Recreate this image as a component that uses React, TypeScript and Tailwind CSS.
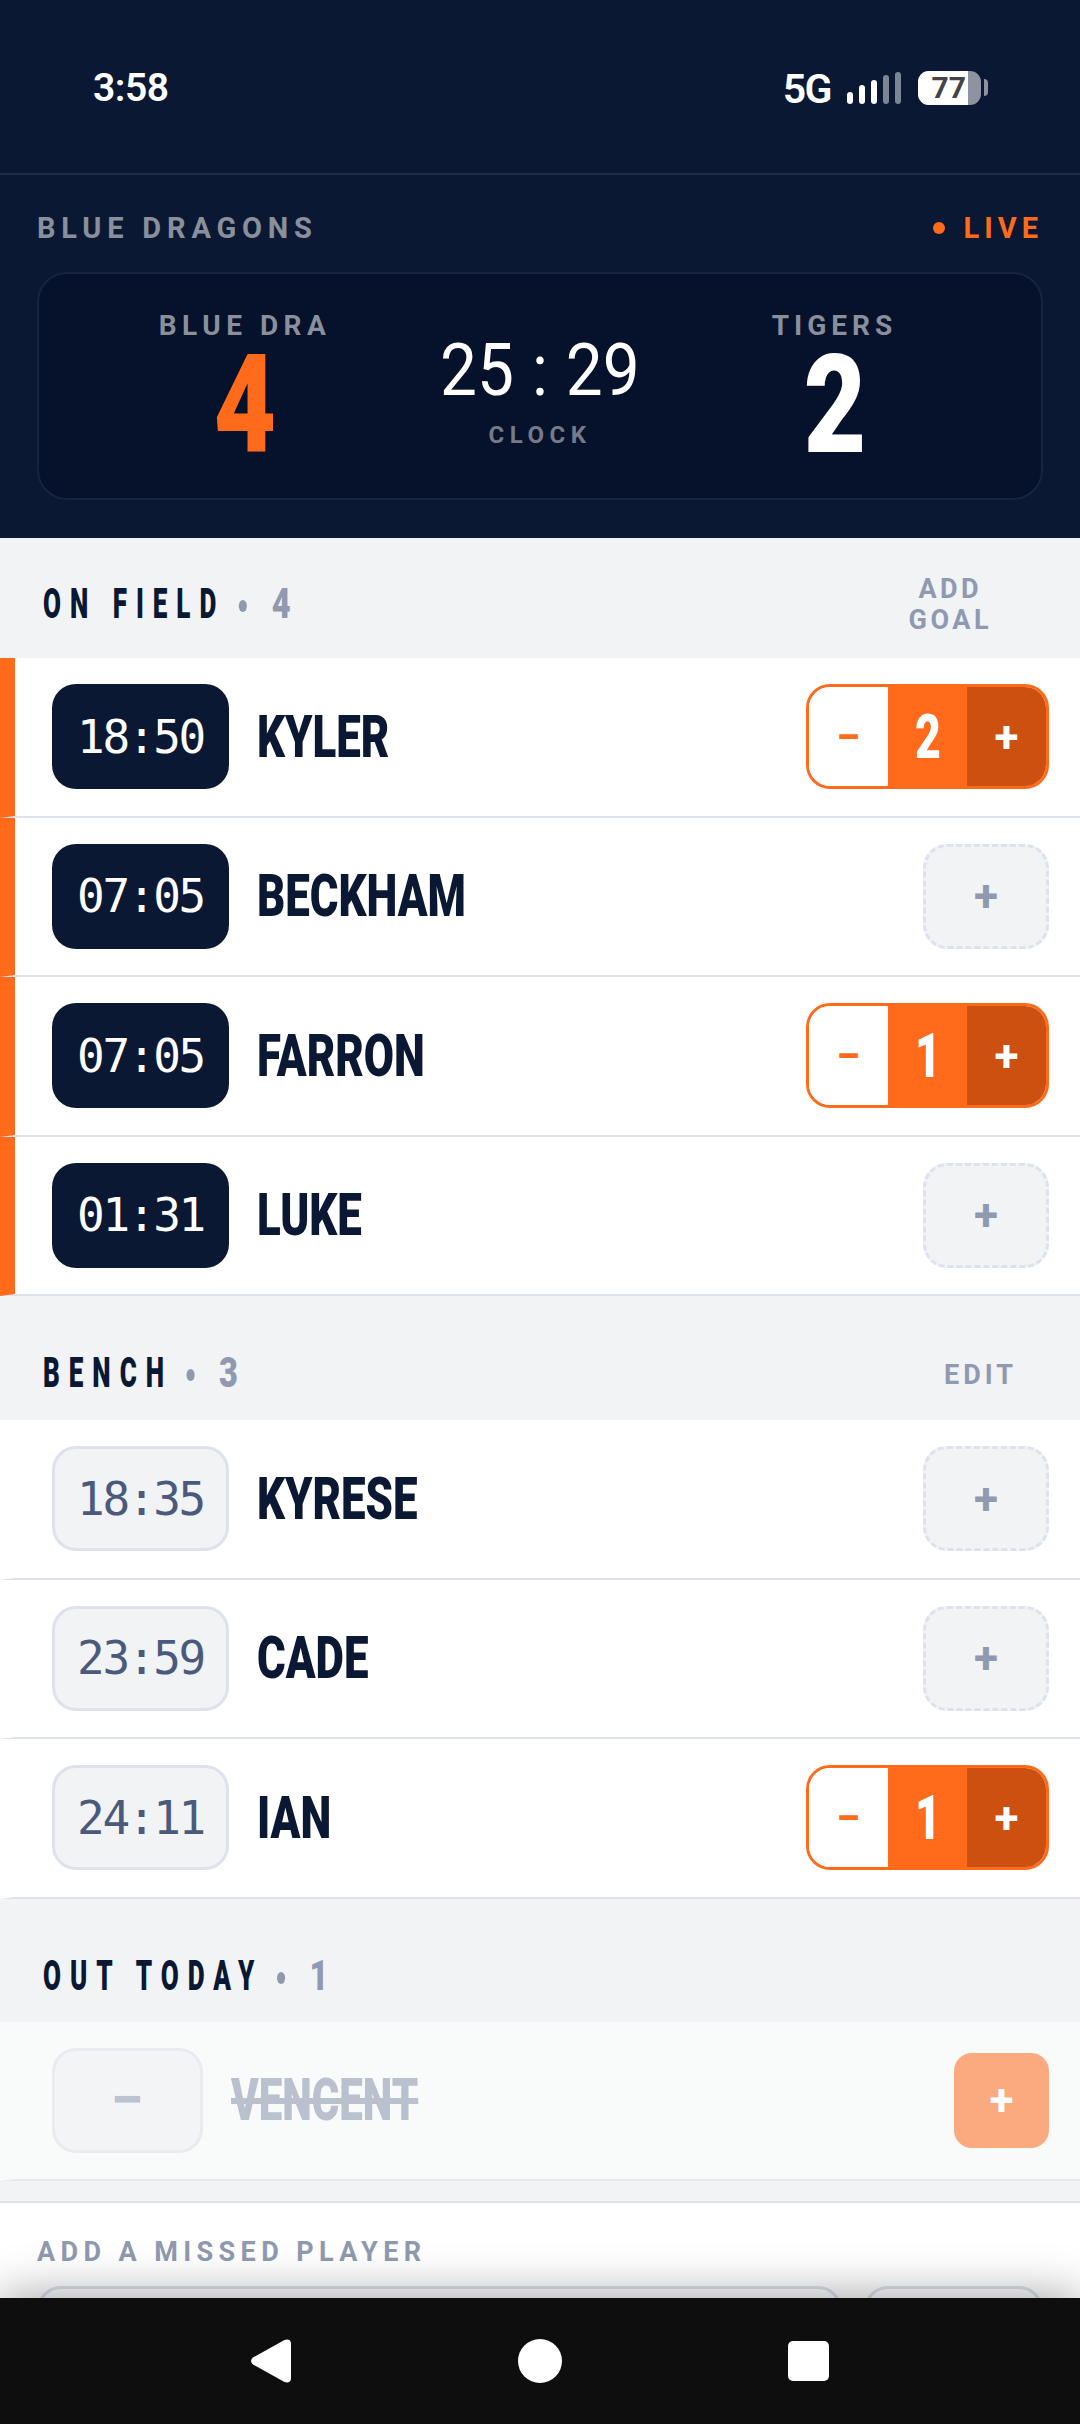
import type { ReactNode } from "react";

const COND = "font-['Roboto','Liberation_Sans',sans-serif] font-black";
const MONO = "font-['DejaVu_Sans_Mono','Liberation_Mono',monospace]";
const UI = "font-['Roboto','Liberation_Sans',sans-serif]";

function Stepper({ count }: { count: number }) {
  return (
    <div className="flex h-[105px] w-[243px] overflow-hidden rounded-[24px] border-[3px] border-[#ff6b1a]">
      <div className={`flex w-[79px] items-center justify-center bg-white text-[44px] font-bold leading-none text-[#ff6b1a] ${UI}`}>
        −
      </div>
      <div className={`flex w-[79px] items-center justify-center bg-[#ff6b1a] text-[62px] leading-none text-white ${COND}`}>
        <span className="scale-x-[0.72]">{count}</span>
      </div>
      <div className={`flex flex-1 items-center justify-center bg-[#cc5010] text-[44px] font-bold leading-none text-white ${UI}`}>
        +
      </div>
    </div>
  );
}

function AddButton() {
  return (
    <div className={`flex h-[105px] w-[126px] items-center justify-center rounded-[24px] border-[3px] border-dashed border-[#dde2ec] bg-[#f1f3f5] text-[44px] font-bold leading-none text-[#8f9ab0] ${UI}`}>
      +
    </div>
  );
}

function PlayerRow({ time, name, goals, active }: { time: string; name: string; goals?: number; active?: boolean }) {
  return (
    <div
      className={`flex h-[159.5px] items-center border-b-2 border-l-[15px] border-b-[#dde2ec] bg-white pl-[37px] pr-[31px] ${
        active ? "border-l-[#ff6b1a]" : "border-l-white"
      }`}
    >
      <div
        className={`flex h-[105px] w-[177px] items-center justify-center rounded-[24px] text-[46px] leading-none tracking-[-2.3px] ${MONO} ${
          active ? "bg-[#0a1833] text-white" : "border-[3px] border-[#dde2ec] bg-[#f1f3f5] text-[#4a5a7c]"
        }`}
      >
        {time}
      </div>
      <div className={`ml-[28px] flex-1 origin-left scale-x-[0.73] text-[60px] leading-none text-[#0a1833] ${COND}`}>{name}</div>
      {goals ? <Stepper count={goals} /> : <AddButton />}
    </div>
  );
}

function SectionHead({ title, count, pb, action }: { title: string; count: number; pb: string; action?: ReactNode }) {
  return (
    <div className={`flex items-end justify-between bg-[#f1f3f5] pl-[43px] ${pb}`}>
      <div className={`origin-left scale-x-[0.62] whitespace-nowrap text-[42px] leading-[30px] tracking-[14.5px] text-[#0a1833] ${COND}`}>
        {title}
        <span className="ml-[17px] align-[-12px] text-[72px] text-[#8f9ab0]">·</span>
        <span className="ml-[20px] inline-block origin-left scale-x-[1.25] text-[#8f9ab0]">{count}</span>
      </div>
      {action}
    </div>
  );
}

function StatusBar() {
  return (
    <div className="flex h-[175px] items-start justify-between border-b-2 border-[#1f2c47] pl-[93px] pr-[92px] pt-[71px] text-white">
      <div className={`text-[39px] font-semibold leading-[34px] tracking-[-0.5px] ${UI}`}>3:58</div>
      <div className="flex items-end">
        <div className={`mb-[-1px] text-[41px] font-semibold leading-[34px] tracking-[-1.5px] ${UI}`}>5G</div>
        <div className="ml-[16px] flex items-end gap-[6px] pb-[1px]">
          <div className="h-[12px] w-[6px] rounded-full bg-white" />
          <div className="h-[19px] w-[6px] rounded-full bg-white" />
          <div className="h-[24px] w-[6px] rounded-full bg-white" />
          <div className="h-[29px] w-[6px] rounded-full bg-[#7d8494]" />
          <div className="h-[32px] w-[6px] rounded-full bg-[#7d8494]" />
        </div>
        <div className="ml-[17px] flex h-[34px] w-[63px] items-center overflow-hidden rounded-[11px] bg-[#8d93a1]">
          <div className={`flex h-full w-[50px] items-center justify-end bg-white pr-[2px] text-[30px] font-bold leading-none text-[#444] ${UI}`}>
            77
          </div>
        </div>
        <div className="mb-[9px] ml-[3px] h-[17px] w-[4px] rounded-r-full bg-[#8d93a1]" />
      </div>
    </div>
  );
}

function ScoreBoard() {
  return (
    <div className="grid h-[228px] grid-cols-[1fr_192px_1fr] rounded-[30px] border-2 border-[#172440] bg-[#06112b]">
      <div className="flex flex-col items-center pl-[7px] pt-[38px]">
        <div className={`text-[28px] font-bold leading-[28px] tracking-[5.5px] text-[#8a8f9c] ${UI}`}>BLUE DRA</div>
        <div className={`mt-[15px] scale-x-[0.78] text-[138px] leading-[100px] text-[#ff6b1a] ${COND}`}>4</div>
      </div>
      <div className="flex flex-col items-center pt-[61px]">
        <div className={`scale-x-[0.9] whitespace-nowrap text-[73px] leading-[70px] text-white ${UI}`}>
          25<span className="mx-[20px]">:</span>29
        </div>
        <div className={`mt-[18px] text-[24px] font-bold leading-[24px] tracking-[5.5px] text-[#757b89] ${UI}`}>CLOCK</div>
      </div>
      <div className="flex flex-col items-center pr-[8px] pt-[38px]">
        <div className={`text-[28px] font-bold leading-[28px] tracking-[5px] text-[#8a8f9c] ${UI}`}>TIGERS</div>
        <div className={`mt-[15px] scale-x-[0.78] text-[138px] leading-[100px] text-white ${COND}`}>2</div>
      </div>
    </div>
  );
}

export default function App() {
  return (
    <div className="relative h-[2424px] w-[1080px] overflow-hidden bg-[#f1f3f5]">
      <div className="h-[538px] bg-[#0a1833]">
        <StatusBar />
        <div className="flex h-[97px] items-start justify-between px-[37px] pt-[39px]">
          <div className={`text-[29px] font-bold leading-[28px] tracking-[5.8px] text-[#8a8f9c] ${UI}`}>BLUE DRAGONS</div>
          <div className="flex items-center">
            <div className="h-[12px] w-[12px] rounded-full bg-[#ff6b1a]" />
            <div className={`ml-[19px] text-[29px] font-bold leading-[28px] tracking-[5px] text-[#ff6b1a] ${UI}`}>LIVE</div>
          </div>
        </div>
        <div className="px-[37px]">
          <ScoreBoard />
        </div>
      </div>

      <div className="h-[120px] pt-[36px]">
        <SectionHead
          title="ON FIELD"
          count={4}
          pb="pb-[36px]"
          action={
            <div className={`mr-[88px] mb-[-15px] text-center text-[27px] font-bold leading-[31px] tracking-[3.5px] text-[#8f9ab0] ${UI}`}>
              ADD
              <br />
              GOAL
            </div>
          }
        />
      </div>
      <PlayerRow time="18:50" name="KYLER" goals={2} active />
      <PlayerRow time="07:05" name="BECKHAM" active />
      <PlayerRow time="07:05" name="FARRON" goals={1} active />
      <PlayerRow time="01:31" name="LUKE" active />

      <div className="h-[124px] pt-[62px]">
        <SectionHead
          title="BENCH"
          count={3}
          pb="pb-[31px]"
          action={<div className={`mr-[63px] text-[27px] font-bold leading-[30px] tracking-[4px] text-[#8f9ab0] ${UI}`}>EDIT</div>}
        />
      </div>
      <PlayerRow time="18:35" name="KYRESE" />
      <PlayerRow time="23:59" name="CADE" />
      <PlayerRow time="24:11" name="IAN" goals={1} />

      <div className="h-[123px] pt-[62px]">
        <SectionHead title="OUT TODAY" count={1} pb="pb-[32px]" />
      </div>
      <div className="flex h-[159px] items-center border-b-2 border-l-[15px] border-b-[#e6e8ee] border-l-[#f9fbfb] bg-[#f9fbfb] pl-[37px] pr-[31px]">
        <div className={`flex h-[105px] w-[151px] items-center justify-center rounded-[24px] border-[3px] border-[#e9ebf0] bg-[#f3f4f6] text-[60px] font-bold leading-none text-[#bcc3d0] ${UI}`}>
          −
        </div>
        <div className={`ml-[28px] flex-1 origin-left scale-x-[0.7] text-[60px] leading-none text-[#b9c0ce] line-through ${COND}`}>VENCENT</div>
        <div className={`flex h-[95px] w-[95px] items-center justify-center rounded-[18px] bg-[#faaa7e] text-[44px] font-bold leading-none text-white ${UI}`}>
          +
        </div>
      </div>
      <div className="h-[22px] border-b-2 border-[#dde2ec]" />
      <div className="h-[220px] bg-white px-[37px] pt-[35px]">
        <div className={`text-[27px] font-bold leading-[28px] tracking-[5.4px] text-[#8f9ab0] ${UI}`}>ADD A MISSED PLAYER</div>
        <div className="mt-[20px] flex gap-[22px]">
          <div className="h-[80px] w-[805px] rounded-[24px] border-[3px] border-[#dde2ec] bg-white" />
          <div className="h-[80px] flex-1 rounded-[24px] border-[3px] border-[#dde2ec] bg-white" />
        </div>
      </div>

      <div className="absolute inset-x-0 bottom-0 flex h-[126px] items-start justify-center bg-[#0e0e0e] pt-[41px] shadow-[0_0_50px_rgba(0,0,0,0.4)]">
        <div className="flex w-[578px] items-center justify-between">
          <svg width="40" height="44" viewBox="0 0 40 44" aria-hidden="true">
            <path d="M2 18.5 L33 1.2 Q39 -1 40 4 L40 40 Q39 45 33 42.8 L2 25.5 Q-2 22 2 18.5 Z" fill="#fff" />
          </svg>
          <div className="h-[44px] w-[44px] rounded-full bg-white" />
          <div className="h-[40px] w-[41px] rounded-[5px] bg-white" />
        </div>
      </div>
    </div>
  );
}
